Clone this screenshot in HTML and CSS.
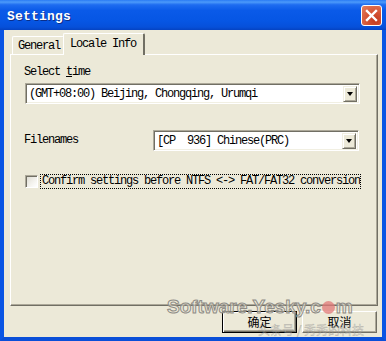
FILE: index.html
```html
<!DOCTYPE html>
<html>
<head>
<meta charset="utf-8">
<link rel="stylesheet" href="styles.css">
</head>
<body>
<div class="window">
  <div class="titlebar">
    <span class="title">Settings</span>
    <span class="close">
      <svg width="21" height="21" viewBox="0 0 21 21">
        <path d="M6 6 L15 15 M15 6 L6 15" stroke="#fff" stroke-width="2.4" stroke-linecap="square"/>
      </svg>
    </span>
  </div>
  <div class="frame">
    <div class="tabs">
      <div class="tab">General</div>
      <div class="tab active">Locale Info</div>
    </div>
    <div class="panel">
      <div class="label">Select <u>t</u>ime</div>
      <div class="combo combo-wide">
        <span class="combo-text">(GMT+08:00) Beijing, Chongqing, Urumqi</span>
        <span class="drop"><span class="tri"></span></span>
      </div>
      <div class="row">
        <span class="label">Filenames</span>
        <div class="combo combo-short">
          <span class="combo-text">[CP  936] Chinese(PRC)</span>
          <span class="drop"><span class="tri"></span></span>
        </div>
      </div>
      <div class="check">
        <span class="box"></span>
        <span class="focus">Confirm settings before NTFS &lt;-&gt; FAT/FAT32 conversion</span>
      </div>
    </div>
    <div class="buttons">
      <div class="btn default"><span class="btn-inner">确定</span></div>
      <div class="btn"><span class="btn-inner">取消</span></div>
    </div>
    <div class="wm1">Software.Yesky.c<span class="wm-dot"></span>m</div>
    <div class="wm2">头条号 / 秀秀的科技</div>
  </div>
</div>
</body>
</html>
```

FILE: styles.css
```css
* { box-sizing: border-box; }
html, body { margin: 0; padding: 0; }
body {
  width: 386px;
  height: 341px;
  overflow: hidden;
  background: #ECE9D8;
  font-family: "Liberation Mono", "DejaVu Sans Mono", monospace;
}
.window {
  width: 386px;
  height: 341px;
  display: flex;
  flex-direction: column;
  background: #0A52E0;
}
.titlebar {
  height: 30px;
  flex: none;
  display: flex;
  align-items: center;
  justify-content: space-between;
  padding: 0 4px 0 7px;
  background: linear-gradient(to bottom, #2A7BF4 0%, #4C9AFA 7%, #1E6CF0 16%, #0A5AE8 35%, #0656E4 70%, #0650DA 90%, #0543C2 100%);
}
.title {
  color: #fff;
  font-family: "Liberation Mono", "DejaVu Sans Mono", monospace;
  font-weight: bold;
  font-size: 13px;
  letter-spacing: 0.2px;
  text-shadow: 1px 1px 0 #0A2E8A;
  margin-top: 2px;
}
.close {
  width: 21px;
  height: 21px;
  border: 1px solid #fff;
  border-radius: 3px;
  background: radial-gradient(circle at 70% 75%, #C2391E 0%, #D65535 45%, #E4805F 100%);
  display: flex;
  align-items: center;
  justify-content: center;
  margin-top: 1px;
}
.close svg { display: block; margin: -1px; }
.frame {
  flex: 1;
  position: relative;
  background: #ECE9D8;
  border-left: 4px solid #0A55E4;
  border-right: 4px solid #0A55E4;
  border-bottom: 4px solid #0A4FD8;
  display: flex;
  flex-direction: column;
  font-size: 12px;
  letter-spacing: -1.2px;
  color: #000;
}
.tabs {
  height: 21px;
  margin-top: 3px;
  padding-left: 8px;
  display: flex;
  align-items: flex-end;
}
.tab {
  height: 18px;
  width: 52px;
  padding-left: 5px;
  line-height: 18px;
  background: #ECE9D8;
  border-top: 1px solid #fff;
  border-left: 1px solid #fff;
  border-right: 1px solid #ACA899;
  border-radius: 2px 2px 0 0;
}
.tab.active {
  height: 22px;
  width: 82px;
  margin-left: -1px;
  margin-bottom: -1px;
  padding-left: 6px;
  line-height: 20px;
  position: relative;
  z-index: 1;
  border-right: 2px solid #716F64;
}
.panel {
  margin-left: 6px;
  width: 368px;
  height: 252px;
  flex: none;
  border-top: 1px solid #fff;
  border-left: 1px solid #fff;
  border-right: 1px solid #716F64;
  border-bottom: 1px solid #716F64;
  box-shadow: inset -1px -1px 0 #ACA899;
  padding: 10px 0 0 13px;
}
.label {
  line-height: 14px;
  height: 14px;
}
.label u { text-underline-offset: 1px; }
.combo {
  height: 21px;
  background: #fff;
  border-top: 1px solid #ACA899;
  border-left: 1px solid #ACA899;
  border-right: 1px solid #fff;
  border-bottom: 1px solid #fff;
  box-shadow: inset 1px 1px 0 #716F64, inset -1px -1px 0 #F1EFE2;
  display: flex;
  align-items: center;
  justify-content: space-between;
  padding: 0 2px 0 3px;
  white-space: pre;
}
.combo-wide {
  width: 335px;
  margin: 4px 0 0 1px;
}
.combo-short {
  width: 206px;
}
.combo-text { line-height: 14px; }
.drop {
  width: 14px;
  height: 16px;
  background: #ECE9D8;
  border-top: 1px solid #F1EFE2;
  border-left: 1px solid #F1EFE2;
  border-right: 1px solid #716F64;
  border-bottom: 1px solid #716F64;
  box-shadow: inset 1px 1px 0 #fff, inset -1px -1px 0 #ACA899;
  display: flex;
  align-items: center;
  justify-content: center;
}
.tri {
  width: 0;
  height: 0;
  border-left: 3.5px solid transparent;
  border-right: 3.5px solid transparent;
  border-top: 4px solid #000;
}
.row {
  margin-top: 26px;
  margin-left: 0;
  width: 335px;
  display: flex;
  align-items: center;
  justify-content: space-between;
}
.row .label { margin-top: -1px; }
.check {
  margin-top: 23px;
  margin-left: 1px;
  display: flex;
  align-items: center;
  height: 15px;
}
.box {
  width: 13px;
  height: 13px;
  background: linear-gradient(135deg, #DCDAD0 0%, #F4F3EE 60%, #fff 100%);
  border-top: 1px solid #ACA899;
  border-left: 1px solid #ACA899;
  border-right: 1px solid #fff;
  border-bottom: 1px solid #fff;
  box-shadow: inset 1px 1px 0 #716F64;
  margin-right: 2px;
}
.focus {
  border: 1px dotted #000;
  height: 15px;
  line-height: 13px;
  padding: 0 0 0 1px;
  width: 321px;
  white-space: pre;
  overflow: hidden;
}
.buttons {
  margin-top: 5px;
  display: flex;
  justify-content: flex-end;
  gap: 5px;
  padding-right: 5px;
}
.btn {
  width: 75px;
  height: 22px;
  background: #ECE9D8;
  border-top: 1px solid #fff;
  border-left: 1px solid #fff;
  border-right: 1px solid #716F64;
  border-bottom: 1px solid #716F64;
  box-shadow: inset -1px -1px 0 #ACA899;
  display: flex;
  align-items: center;
  justify-content: center;
  font-family: "Noto Sans CJK SC", sans-serif;
  font-size: 12px;
  letter-spacing: 0;
}
.btn.default {
  border: 1px solid #000;
  box-shadow: inset 1px 1px 0 #fff, inset -1px -1px 0 #716F64, inset -2px -2px 0 #ACA899;
}
.btn-inner { line-height: 14px; }
.wm1 {
  position: absolute;
  left: 163px;
  top: 266px;
  font-family: "Liberation Sans", Arial, sans-serif;
  font-weight: bold;
  font-size: 19px;
  letter-spacing: 0;
  color: rgba(236, 233, 216, 0.6);
  -webkit-text-stroke: 1px #8F8C86;
  white-space: nowrap;
  z-index: 2;
}
.wm-dot {
  display: inline-block;
  width: 13px;
  height: 13px;
  border-radius: 50%;
  background: rgba(226, 120, 120, 0.75);
  vertical-align: -1px;
  margin: 0 1px;
}
.wm2 {
  position: absolute;
  left: 254px;
  top: 293px;
  font-family: "Noto Sans CJK SC", sans-serif;
  font-size: 12px;
  line-height: 14px;
  letter-spacing: 0;
  color: rgba(255, 255, 255, 0.3);
  -webkit-text-stroke: 0.5px rgba(90, 90, 90, 0.4);
  white-space: nowrap;
  z-index: 2;
}
```
